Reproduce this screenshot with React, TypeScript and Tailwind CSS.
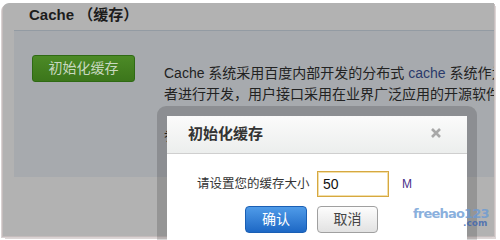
import React from "react";

const cjk = { fontFamily: '"Liberation Sans", "Noto Sans CJK SC", sans-serif' };

export default function App() {
  return (
    <div className="relative w-[500px] h-[240px] bg-white overflow-hidden" style={cjk}>
      <div className="pt-[3px] pl-[3px]">
        {/* page sheet (dimmed by modal overlay) */}
        <div className="relative w-[491px] h-[233px] bg-[#b2b2b2] rounded-tl-[6px] overflow-hidden shadow-[-1px_1px_0_#c4bcbc,-2px_2px_0_#d9d2d2,1px_1px_0_#c8c0c0,2px_3px_0_#ddd6d6]">
          <div className="h-[27px] pl-[26px] leading-[23px] text-[15px] font-bold text-[#1c1c1c]">
            Cache （缓存）
          </div>
          <div className="ml-[11px] h-[147px] border-t border-[#939ba3] bg-[#a7aaae] flex items-start overflow-hidden">
            <div className="pl-[18px] pt-[24px] shrink-0">
              <div className="w-[103px] h-[27px] rounded-[3px] border border-[#2f6a14] bg-gradient-to-b from-[#4c8a26] to-[#3c761b] flex items-center justify-center text-[14px] text-[#c8d8c0]">
                初始化缓存
              </div>
            </div>
            <div className="ml-[29px] pt-[32px] text-[14px] leading-[21px] text-[#222] whitespace-nowrap">
              <div>
                Cache 系统采用百度内部开发的分布式 <span className="text-[#2b3a6b]">cache</span> 系统作为
              </div>
              <div>者进行开发，用户接口采用在业界广泛应用的开源软件</div>
              <div className="mt-[20px]">参考</div>
            </div>
          </div>
        </div>
      </div>

      {/* modal dialog */}
      <div className="absolute left-[157px] top-[106px] w-[320px] h-[150px] rounded-[9px] border-[10px] border-[rgba(0,0,0,0.16)] bg-white bg-clip-padding">
        <div className="h-[38px] flex items-center justify-between pl-[21px] pr-[26px] border-b border-[#cfcfcf] bg-gradient-to-b from-[#fbfbfb] to-[#eceeed]">
          <span className="text-[15px] font-bold text-[#333]">初始化缓存</span>
          <svg width="10" height="10" viewBox="0 0 10 10" className="-mt-[3px]">
            <path d="M1 1 L9 9 M9 1 L1 9" stroke="#a8a8a8" strokeWidth="2.6" />
          </svg>
        </div>
        <div className="mt-[17px] pl-[30px] flex items-center h-[26px]">
          <span className="w-[120px] text-[12.5px] text-[#333]">请设置您的缓存大小</span>
          <div className="w-[72px] h-[26px] border border-[#d6a841] shadow-[inset_0_0_0_1px_#f3dfa8] flex items-center pl-[5px] text-[14px] text-[#111]">
            50
          </div>
          <span className="ml-[13px] text-[12px] text-[#4a2f8a]">M</span>
        </div>
        <div className="flex pl-[78px] gap-[10px] mt-[9px]">
          <div className="w-[62px] h-[27px] rounded-[4px] border border-[#1a5fb4] bg-gradient-to-b from-[#4f9be8] to-[#1d68c5] flex items-center justify-center text-[14px] text-white">
            确认
          </div>
          <div className="w-[61px] h-[27px] rounded-[4px] border border-[#a0a0a0] bg-gradient-to-b from-[#fdfdfd] to-[#e2e2e2] flex items-center justify-center text-[14px] text-[#444]">
            取消
          </div>
        </div>
      </div>

      {/* watermark */}
      <div className="absolute left-[413px] top-[207px] leading-none" style={{ fontFamily: '"DejaVu Sans", sans-serif' }}>
        <div className="text-[13px] font-bold tracking-[-0.8px] text-[#6a9ad4]/80">freehao123</div>
        <div className="ml-[50px] -mt-[1px] text-[9px] font-bold text-[#3b64b0]/80">.com</div>
      </div>
    </div>
  );
}
